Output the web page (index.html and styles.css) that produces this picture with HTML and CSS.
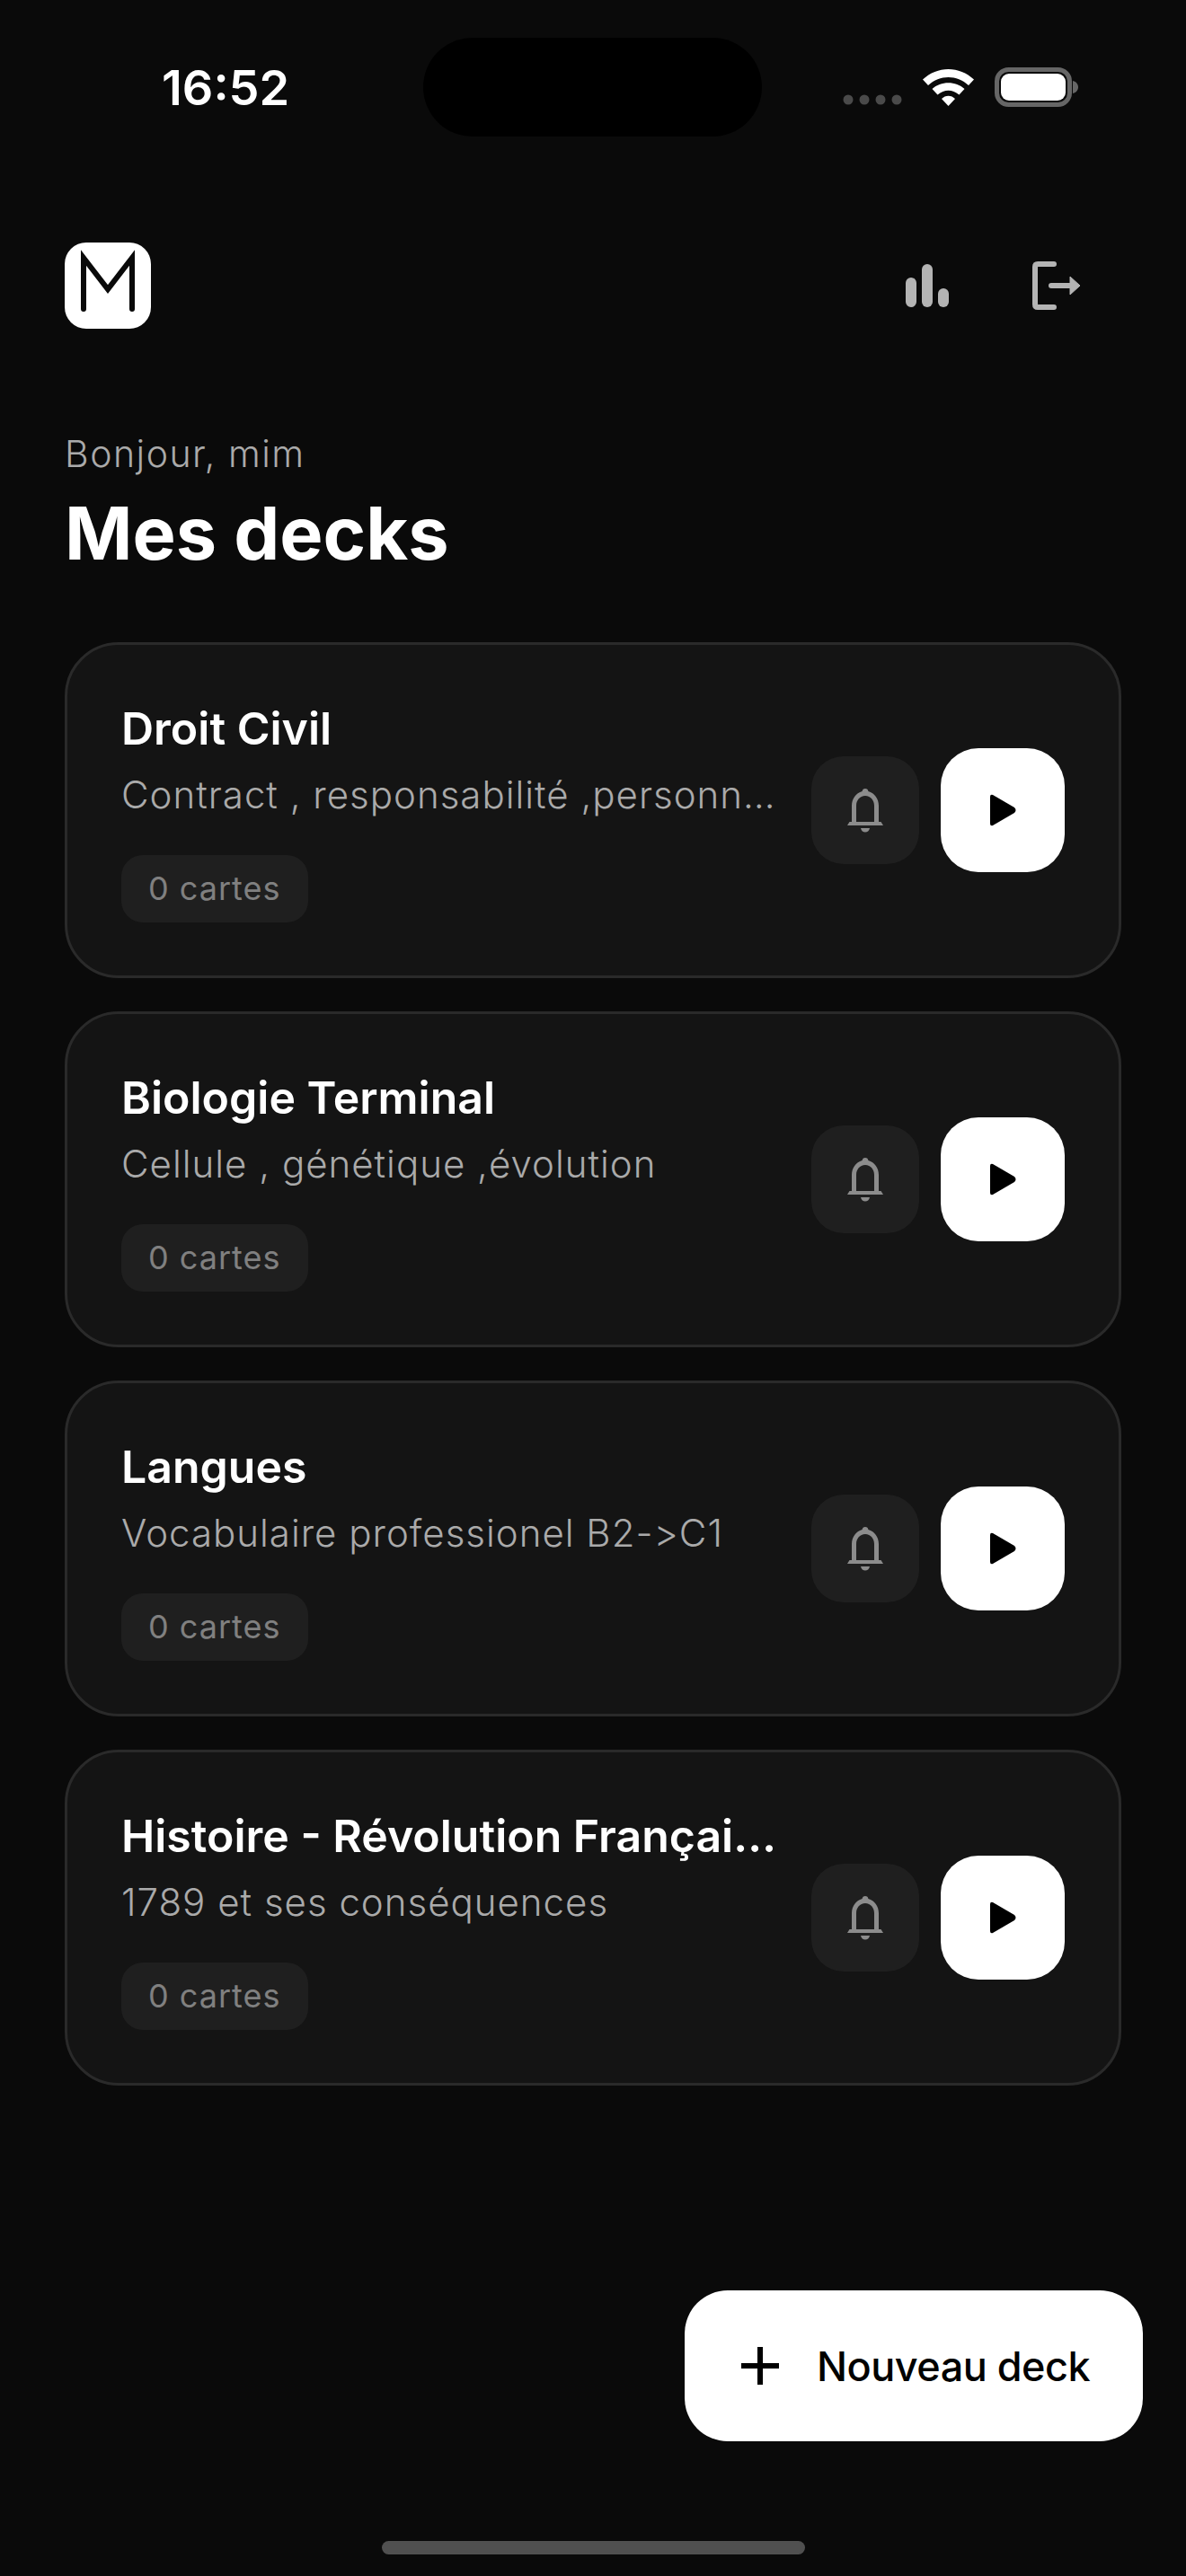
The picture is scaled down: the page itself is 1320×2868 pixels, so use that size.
FILE: index.html
```html
<!DOCTYPE html>
<html lang="fr">
<head>
    <meta charset="UTF-8">
    <meta name="viewport" content="width=device-width, initial-scale=1.0">
    <title>Mes decks</title>
    <link rel="stylesheet" href="styles.css">
</head>
<body>
    <div class="screen">
        <!-- Status bar -->
        <div class="status-bar">
            <span class="time">16:52</span>
            <div class="island"></div>
            <svg class="status-icons" width="286" height="48" viewBox="0 0 286 48">
                <circle cx="7" cy="36" r="5.5" fill="#4a4a4a"/>
                <circle cx="25" cy="36" r="5.5" fill="#4a4a4a"/>
                <circle cx="43" cy="36" r="5.5" fill="#4a4a4a"/>
                <circle cx="61" cy="36" r="5.5" fill="#4a4a4a"/>
                <path d="M90 13.5 C106 -2 131 -2 147 13.5 L141 20 C128 8 109 8 96 20 Z" fill="#fff"/>
                <path d="M100.500 24 C110 15 127 15 136.500 24 L130.500 30.500 C123 24 114 24 106.500 30.500 Z" fill="#fff"/>
                <path d="M111 35 C115 30.500 122 30.500 126 35 L118.500 43 Z" fill="#fff"/>
                <rect x="172.500" y="2.500" width="81" height="39" rx="13" fill="none" stroke="#666" stroke-width="5"/>
                <rect x="177" y="7" width="72" height="30" rx="9" fill="#fff"/>
                <path d="M257 15 C261 16 263 19 263 22 C263 25 261 28 257 29 Z" fill="#666"/>
            </svg>
        </div>

        <!-- Top bar -->
        <header class="top-bar">
            <div class="logo">
                <svg width="96" height="96" viewBox="0 0 96 96">
                    <path d="M21 74 V17 L48 52 L75 17 V74" fill="none" stroke="#0a0a0a" stroke-width="6" stroke-linecap="round" stroke-linejoin="miter"/>
                </svg>
            </div>
            <div class="top-actions">
                <svg width="48" height="48" viewBox="0 0 48 48">
                    <rect x="0" y="15" width="12" height="33" rx="6" fill="#b4b4b4"/>
                    <rect x="18" y="0" width="12" height="48" rx="6" fill="#b4b4b4"/>
                    <rect x="36" y="27" width="12" height="21" rx="6" fill="#b4b4b4"/>
                </svg>
                <svg width="54" height="54" viewBox="0 0 54 54">
                    <path d="M24 3 H6 Q3 3 3 6 V48 Q3 51 6 51 H24" fill="none" stroke="#b4b4b4" stroke-width="6" stroke-linecap="round"/>
                    <path d="M21 27 H44" fill="none" stroke="#b4b4b4" stroke-width="6" stroke-linecap="round"/>
                    <path d="M42 17 L53 27 L42 37 Z" fill="#b4b4b4" stroke="#b4b4b4" stroke-width="1" stroke-linejoin="round"/>
                </svg>
            </div>
        </header>

        <p class="greeting">Bonjour, mim</p>
        <h1 class="page-title">Mes decks</h1>

        <!-- Deck list -->
        <div class="deck-list">
            <div class="deck-card">
                <div class="deck-info">
                    <div class="deck-title">Droit Civil</div>
                    <div class="deck-desc">Contract , responsabilité ,personn…</div>
                    <span class="deck-count">0 cartes</span>
                </div>
                <button class="bell-btn">
                    <svg width="42" height="51" viewBox="0 0 42 51"><path d="M21 1 a3.500 3.500 0 0 1 3.400 3 C31.500 6 36 12.500 36 20 V38 H38.500 L41 42 H1 L3.500 38 H6 V20 C6 12.500 10.500 6 17.600 4 A3.500 3.500 0 0 1 21 1 Z M21 9 C15 9 11 14 11 20 V38 H31 V20 C31 14 27 9 21 9 Z M16 45 H26 C25 51 17 51 16 45 Z" fill="#8c8c8c" fill-rule="evenodd"/></svg>
                </button>
                <button class="play-btn">
                    <svg width="30" height="36" viewBox="0 0 30 36"><path d="M1 3 Q1 0 4 1 L28 15 Q31 18 28 21 L4 35 Q1 36 1 33 Z" fill="#000"/></svg>
                </button>
            </div>
            <div class="deck-card">
                <div class="deck-info">
                    <div class="deck-title">Biologie Terminal</div>
                    <div class="deck-desc">Cellule , génétique ,évolution</div>
                    <span class="deck-count">0 cartes</span>
                </div>
                <button class="bell-btn">
                    <svg width="42" height="51" viewBox="0 0 42 51"><path d="M21 1 a3.500 3.500 0 0 1 3.400 3 C31.500 6 36 12.500 36 20 V38 H38.500 L41 42 H1 L3.500 38 H6 V20 C6 12.500 10.500 6 17.600 4 A3.500 3.500 0 0 1 21 1 Z M21 9 C15 9 11 14 11 20 V38 H31 V20 C31 14 27 9 21 9 Z M16 45 H26 C25 51 17 51 16 45 Z" fill="#8c8c8c" fill-rule="evenodd"/></svg>
                </button>
                <button class="play-btn">
                    <svg width="30" height="36" viewBox="0 0 30 36"><path d="M1 3 Q1 0 4 1 L28 15 Q31 18 28 21 L4 35 Q1 36 1 33 Z" fill="#000"/></svg>
                </button>
            </div>
            <div class="deck-card">
                <div class="deck-info">
                    <div class="deck-title">Langues</div>
                    <div class="deck-desc">Vocabulaire professionel B2-&gt;C1</div>
                    <span class="deck-count">0 cartes</span>
                </div>
                <button class="bell-btn">
                    <svg width="42" height="51" viewBox="0 0 42 51"><path d="M21 1 a3.500 3.500 0 0 1 3.400 3 C31.500 6 36 12.500 36 20 V38 H38.500 L41 42 H1 L3.500 38 H6 V20 C6 12.500 10.500 6 17.600 4 A3.500 3.500 0 0 1 21 1 Z M21 9 C15 9 11 14 11 20 V38 H31 V20 C31 14 27 9 21 9 Z M16 45 H26 C25 51 17 51 16 45 Z" fill="#8c8c8c" fill-rule="evenodd"/></svg>
                </button>
                <button class="play-btn">
                    <svg width="30" height="36" viewBox="0 0 30 36"><path d="M1 3 Q1 0 4 1 L28 15 Q31 18 28 21 L4 35 Q1 36 1 33 Z" fill="#000"/></svg>
                </button>
            </div>
            <div class="deck-card">
                <div class="deck-info">
                    <div class="deck-title">Histoire - Révolution Françai…</div>
                    <div class="deck-desc">1789 et ses conséquences</div>
                    <span class="deck-count">0 cartes</span>
                </div>
                <button class="bell-btn">
                    <svg width="42" height="51" viewBox="0 0 42 51"><path d="M21 1 a3.500 3.500 0 0 1 3.400 3 C31.500 6 36 12.500 36 20 V38 H38.500 L41 42 H1 L3.500 38 H6 V20 C6 12.500 10.500 6 17.600 4 A3.500 3.500 0 0 1 21 1 Z M21 9 C15 9 11 14 11 20 V38 H31 V20 C31 14 27 9 21 9 Z M16 45 H26 C25 51 17 51 16 45 Z" fill="#8c8c8c" fill-rule="evenodd"/></svg>
                </button>
                <button class="play-btn">
                    <svg width="30" height="36" viewBox="0 0 30 36"><path d="M1 3 Q1 0 4 1 L28 15 Q31 18 28 21 L4 35 Q1 36 1 33 Z" fill="#000"/></svg>
                </button>
            </div>
        </div>

        <!-- Floating button -->
        <button class="new-deck">
            <svg width="42" height="42" viewBox="0 0 42 42"><path d="M21 0 V42 M0 21 H42" stroke="#000" stroke-width="6"/></svg>
            <span>Nouveau deck</span>
        </button>

        <div class="home-bar"></div>
    </div>
</body>
</html>
```

FILE: styles.css
```css
body {
    margin: 0;
    background-color: #0a0a0a;
    font-family: Inter, "Liberation Sans", sans-serif;
    color: #fff;
}

.screen {
    position: relative;
    width: 1320px;
    height: 2868px;
    padding: 0 72px;
    box-sizing: border-box;
    overflow: hidden;
}

.status-bar {
    display: flex;
    align-items: flex-start;
    height: 270px;
    margin-left: 108px;
}

.time {
    width: 291px;
    margin-top: 68px;
    font-size: 54px;
    line-height: 60px;
    font-weight: 600;
}

.island {
    width: 377px;
    height: 110px;
    margin-top: 42px;
    border-radius: 55px;
    background-color: #000;
}

.status-icons {
    margin-top: 75px;
    margin-left: 89px;
}

.top-bar {
    display: flex;
    justify-content: space-between;
    align-items: center;
    height: 96px;
}

.logo {
    width: 96px;
    height: 96px;
    border-radius: 24px;
    background-color: #fff;
}

.logo svg {
    display: block;
}

.top-actions {
    display: flex;
    align-items: center;
    gap: 93px;
    margin-right: 45px;
}

.top-actions svg {
    display: block;
}

.greeting {
    margin: 112px 0 0;
    font-size: 41px;
    line-height: 54px;
    font-weight: 300;
    letter-spacing: 1.5px;
    color: #aaa;
}

.page-title {
    margin: 11px 0 0;
    font-size: 81px;
    line-height: 102px;
    font-weight: 700;
}

.deck-list {
    display: flex;
    flex-direction: column;
    gap: 37px;
    margin-top: 70px;
}

.deck-card {
    display: flex;
    align-items: center;
    height: 374px;
    padding: 0 60px;
    box-sizing: border-box;
    border: 3px solid #2a2a2a;
    border-radius: 60px;
    background-color: #141414;
}

.deck-info {
    flex: 1;
    min-width: 0;
    margin-right: 30px;
}

.deck-title {
    font-size: 50px;
    line-height: 66px;
    font-weight: 600;
    white-space: nowrap;
}

.deck-desc {
    margin-top: 11px;
    font-size: 42px;
    line-height: 60px;
    font-weight: 300;
    letter-spacing: 1px;
    color: #aaa;
    white-space: nowrap;
}

.deck-count {
    display: inline-block;
    margin-top: 37px;
    padding: 0 30px;
    font-size: 36px;
    line-height: 75px;
    letter-spacing: 1px;
    color: #808080;
    border-radius: 24px;
    background-color: #1f1f1f;
}

.bell-btn, .play-btn {
    display: flex;
    align-items: center;
    justify-content: center;
    flex-shrink: 0;
    padding: 0;
    border: none;
}

.bell-btn {
    width: 120px;
    height: 120px;
    border-radius: 36px;
    background-color: #1f1f1f;
}

.play-btn {
    width: 138px;
    height: 138px;
    margin-left: 24px;
    border-radius: 42px;
    background-color: #fff;
}

.new-deck {
    position: absolute;
    left: 762px;
    top: 2550px;
    display: flex;
    align-items: center;
    gap: 42px;
    width: 510px;
    height: 168px;
    padding: 0 0 0 63px;
    box-sizing: border-box;
    border: none;
    border-radius: 48px;
    background-color: #fff;
    font-family: inherit;
    font-size: 45px;
    font-weight: 500;
    letter-spacing: -0.5px;
    color: #000;
}

.home-bar {
    position: absolute;
    left: 425px;
    top: 2829px;
    width: 471px;
    height: 15px;
    border-radius: 8px;
    background-color: #505050;
}
```
